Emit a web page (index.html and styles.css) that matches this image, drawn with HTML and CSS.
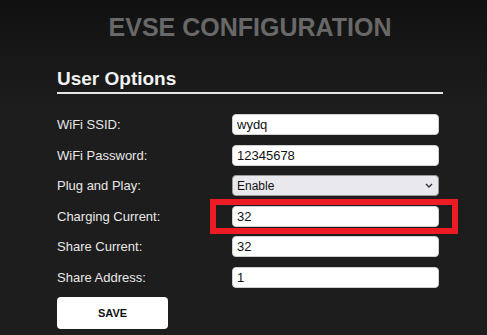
FILE: index.html
```html
<!DOCTYPE html>
<html lang="en">
<head>
  <meta charset="UTF-8">
  <meta name="viewport" content="width=device-width, initial-scale=1.0">
  <title>EVSE Configuration</title>
  <link rel="stylesheet" href="styles.css">
</head>
<body>
  <div class="page">
    <h1>EVSE CONFIGURATION</h1>
    <h2>User Options</h2>

    <form class="options" onsubmit="return false">
      <div class="row">
        <label for="ssid">WiFi SSID:</label>
        <input id="ssid" type="text" value="wydq">
      </div>
      <div class="row">
        <label for="pass">WiFi Password:</label>
        <input id="pass" type="text" value="12345678">
      </div>
      <div class="row">
        <label for="pnp">Plug and Play:</label>
        <div class="select-wrap">
          <select id="pnp">
            <option>Enable</option>
            <option>Disable</option>
          </select>
          <svg class="chevron" width="8" height="5" viewBox="0 0 8 5">
            <path d="M1 1 L4 4 L7 1" fill="none" stroke="#333" stroke-width="1.4"/>
          </svg>
        </div>
      </div>
      <div class="row">
        <label for="current">Charging Current:</label>
        <input id="current" type="text" value="32">
        <span class="highlight"></span>
      </div>
      <div class="row">
        <label for="share">Share Current:</label>
        <input id="share" type="text" value="32">
      </div>
      <div class="row">
        <label for="addr">Share Address:</label>
        <input id="addr" type="text" value="1">
      </div>
      <button class="save">SAVE</button>
    </form>
  </div>
</body>
</html>
```

FILE: styles.css
```css
:root {
  --bg-top: #111;
  --bg: #1d1d1d;
  --label: #e8e8e8;
  --mark: #ed1c24;
}

body {
  margin: 0;
  min-height: 335px;
  font-family: "Liberation Sans", Arial, sans-serif;
  background: linear-gradient(var(--bg-top) 0, var(--bg) 110px);
  background-color: var(--bg);
  color: var(--label);
}

.page {
  width: 386px;
  margin-left: 57px;
  padding-top: 13px;
}

h1 {
  margin: 0;
  font-size: 25px;
  line-height: 29px;
  text-align: center;
  color: #686868;
}

h2 {
  margin: 26px 0 0;
  font-size: 19px;
  line-height: 22px;
  padding-bottom: 2px;
  border-bottom: 2px solid #e6e6e6;
  color: #f2f2f2;
}

.options {
  margin-top: 20px;
  display: flex;
  flex-direction: column;
  gap: 9.5px;
}

.row {
  position: relative;
  display: grid;
  grid-template-columns: 175px 207px;
  align-items: center;
  height: 21px;
}

label {
  font-size: 13px;
}

input,
select {
  box-sizing: border-box;
  width: 207px;
  height: 21px;
  margin: 0;
  padding: 0 4px;
  font-family: "Liberation Sans", Arial, sans-serif;
  font-size: 13px;
  color: #111;
  background: #fff;
  border: 1px solid #d0d0d0;
  border-radius: 4px;
  outline: none;
}

.select-wrap {
  position: relative;
  height: 21px;
}

select {
  appearance: none;
  background: #e9e9ed;
  border-color: #9a9a9a;
  font-size: 12px;
}

.chevron {
  position: absolute;
  right: 6px;
  top: 8px;
}

.highlight {
  position: absolute;
  left: 153px;
  top: -7px;
  width: 236px;
  height: 23px;
  border: 6px solid var(--mark);
  pointer-events: none;
}

.save {
  width: 111px;
  height: 32px;
  margin-top: 0;
  background: #fff;
  color: #111;
  border: none;
  border-radius: 4px;
  font-family: "Liberation Sans", Arial, sans-serif;
  font-size: 11px;
  font-weight: bold;
  cursor: pointer;
}
```
